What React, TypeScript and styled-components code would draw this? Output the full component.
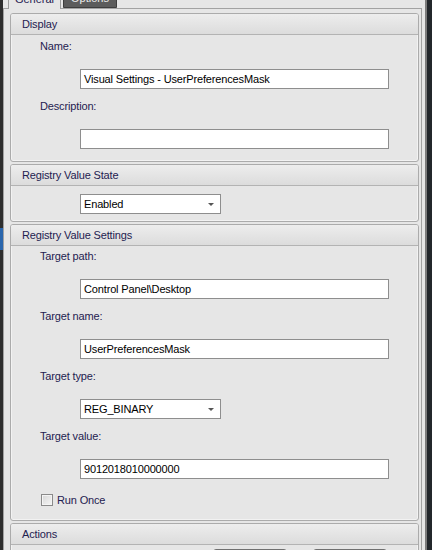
import React from 'react';
import styled, { createGlobalStyle } from 'styled-components';

const Global = createGlobalStyle`
  html, body { margin: 0; padding: 0; height: 550px; overflow: hidden; background: #e6e6e6; }
  body { font-family: "Liberation Sans", Arial, sans-serif; font-size: 11px; }
`;

const Frame = styled.div`
  display: flex;
  width: 432px;
  height: 550px;
  overflow: hidden;
  background: #e6e6e6;
`;

const LeftEdge = styled.div`
  flex: none;
  width: 3px;
  background: linear-gradient(to bottom, #2e2e2e 0, #2e2e2e 228px, #2a66ad 228px, #2a66ad 250px, #2e2e2e 250px);
`;

const RightEdge = styled.div`
  flex: none;
  width: 7px;
  margin-left: 3px;
  display: flex;
`;

const EdgeGrey = styled.div`
  width: 2px;
  background: #7c7c7c;
`;

const EdgeDark = styled.div`
  flex: 1;
  background: #23272b;
`;

const Main = styled.div`
  flex: none;
  width: 419px;
  display: flex;
  flex-direction: column;
`;

const TabStrip = styled.div`
  height: 8px;
  display: flex;
  align-items: flex-end;
  gap: 2px;
  padding-left: 5px;
  position: relative;
  z-index: 1;
`;

const Tab = styled.div<{ $active?: boolean }>`
  flex: none;
  box-sizing: border-box;
  width: ${(p) => (p.$active ? 53 : 54)}px;
  height: ${(p) => (p.$active ? 21 : 20)}px;
  margin-bottom: ${(p) => (p.$active ? -1 : 0)}px;
  display: flex;
  align-items: flex-end;
  justify-content: center;
  padding-bottom: ${(p) => (p.$active ? 3 : 2)}px;
  border: 1px solid ${(p) => (p.$active ? '#9c9c9c' : '#3e3e3e')};
  border-bottom: ${(p) => (p.$active ? 'none' : '1px solid #3e3e3e')};
  border-radius: 2px 2px 0 0;
  background: ${(p) => (p.$active ? '#e6e6e6' : '#5c5c5c')};
  color: ${(p) => (p.$active ? '#1f2150' : '#ececec')};
  line-height: 13px;
`;

const Panel = styled.div`
  flex: 1;
  border: 1px solid #a2a2a2;
  border-bottom: none;
  padding: 4px 2px 0 6px;
  display: flex;
  flex-direction: column;
  gap: 2px;
  background: #e6e6e6;
`;

const Group = styled.section`
  flex: none;
  border: 1px solid #ababab;
  border-radius: 3px;
  box-shadow: inset 0 0 0 1px #f2f2f2;
  background: #e6e6e6;
  overflow: hidden;
`;

const GroupHeader = styled.div`
  height: 20px;
  line-height: 20px;
  padding-left: 11px;
  border-bottom: 1px solid #b3b3b3;
  background: linear-gradient(to bottom, #ededed, #dcdcdc);
  color: #1f2150;
  letter-spacing: -0.15px;
`;

const GroupBody = styled.div<{ $pt: number; $pb: number }>`
  padding: ${(p) => p.$pt}px 29px ${(p) => p.$pb}px 29px;
  display: flex;
  flex-direction: column;
`;

const Field = styled.div`
  display: flex;
  flex-direction: column;
  & + & {
    margin-top: 10px;
  }
`;

const FieldLabel = styled.div`
  height: 14px;
  line-height: 14px;
  margin-bottom: 16px;
  color: #1f2150;
  letter-spacing: -0.15px;
`;

const TextBox = styled.div<{ $w?: number }>`
  box-sizing: border-box;
  height: 20px;
  margin-left: 40px;
  width: ${(p) => (p.$w ? `${p.$w}px` : 'auto')};
  border: 1px solid #8e8e8e;
  background: #ffffff;
  padding-left: 3px;
  line-height: 18px;
  color: #000000;
  letter-spacing: -0.15px;
  white-space: nowrap;
  overflow: hidden;
`;

const Combo = styled.div`
  box-sizing: border-box;
  height: 20px;
  width: 141px;
  margin-left: 40px;
  border: 1px solid #8e8e8e;
  background: #ffffff;
  padding: 0 6px 0 3px;
  display: flex;
  align-items: center;
  justify-content: space-between;
  color: #000000;
  letter-spacing: -0.15px;
`;

const Arrow = styled.span`
  width: 0;
  height: 0;
  border-left: 3px solid transparent;
  border-right: 3px solid transparent;
  border-top: 3px solid #555555;
  margin-top: 1px;
`;

const CheckRow = styled.label`
  display: flex;
  align-items: center;
  gap: 4px;
  margin-top: 15px;
  padding-left: 1px;
  height: 12px;
  color: #1f2150;
  letter-spacing: -0.15px;
`;

const CheckBox = styled.span`
  box-sizing: border-box;
  width: 12px;
  height: 12px;
  border: 1px solid #8a8a8a;
  background: linear-gradient(to bottom right, #d6d6d6, #f6f6f6);
  box-shadow: inset 0 0 0 1px #f4f4f4;
`;

const ButtonRow = styled.div`
  display: flex;
  justify-content: flex-end;
  gap: 26px;
  padding: 4px 31px 0 0;
`;

const Button = styled.div`
  box-sizing: border-box;
  width: 74px;
  height: 23px;
  border: 1px solid #707070;
  border-radius: 3px;
  background: linear-gradient(to bottom, #f2f2f2, #dddddd);
`;

export default function App() {
  return (
    <>
      <Global />
      <Frame>
        <LeftEdge />
        <Main>
          <TabStrip>
            <Tab $active>General</Tab>
            <Tab>Options</Tab>
          </TabStrip>
          <Panel>
            <Group>
              <GroupHeader>Display</GroupHeader>
              <GroupBody $pt={4} $pb={12}>
                <Field>
                  <FieldLabel>Name:</FieldLabel>
                  <TextBox>Visual Settings - UserPreferencesMask</TextBox>
                </Field>
                <Field>
                  <FieldLabel>Description:</FieldLabel>
                  <TextBox />
                </Field>
              </GroupBody>
            </Group>
            <Group>
              <GroupHeader>Registry Value State</GroupHeader>
              <GroupBody $pt={8} $pb={7}>
                <Combo>
                  <span>Enabled</span>
                  <Arrow />
                </Combo>
              </GroupBody>
            </Group>
            <Group>
              <GroupHeader>Registry Value Settings</GroupHeader>
              <GroupBody $pt={3} $pb={14}>
                <Field>
                  <FieldLabel>Target path:</FieldLabel>
                  <TextBox>Control Panel\Desktop</TextBox>
                </Field>
                <Field>
                  <FieldLabel>Target name:</FieldLabel>
                  <TextBox>UserPreferencesMask</TextBox>
                </Field>
                <Field>
                  <FieldLabel>Target type:</FieldLabel>
                  <Combo>
                    <span>REG_BINARY</span>
                    <Arrow />
                  </Combo>
                </Field>
                <Field>
                  <FieldLabel>Target value:</FieldLabel>
                  <TextBox>9012018010000000</TextBox>
                </Field>
                <CheckRow>
                  <CheckBox />
                  <span>Run Once</span>
                </CheckRow>
              </GroupBody>
            </Group>
            <Group>
              <GroupHeader>Actions</GroupHeader>
              <ButtonRow>
                <Button />
                <Button />
              </ButtonRow>
            </Group>
          </Panel>
        </Main>
        <RightEdge>
          <EdgeGrey />
          <EdgeDark />
        </RightEdge>
      </Frame>
    </>
  );
}
